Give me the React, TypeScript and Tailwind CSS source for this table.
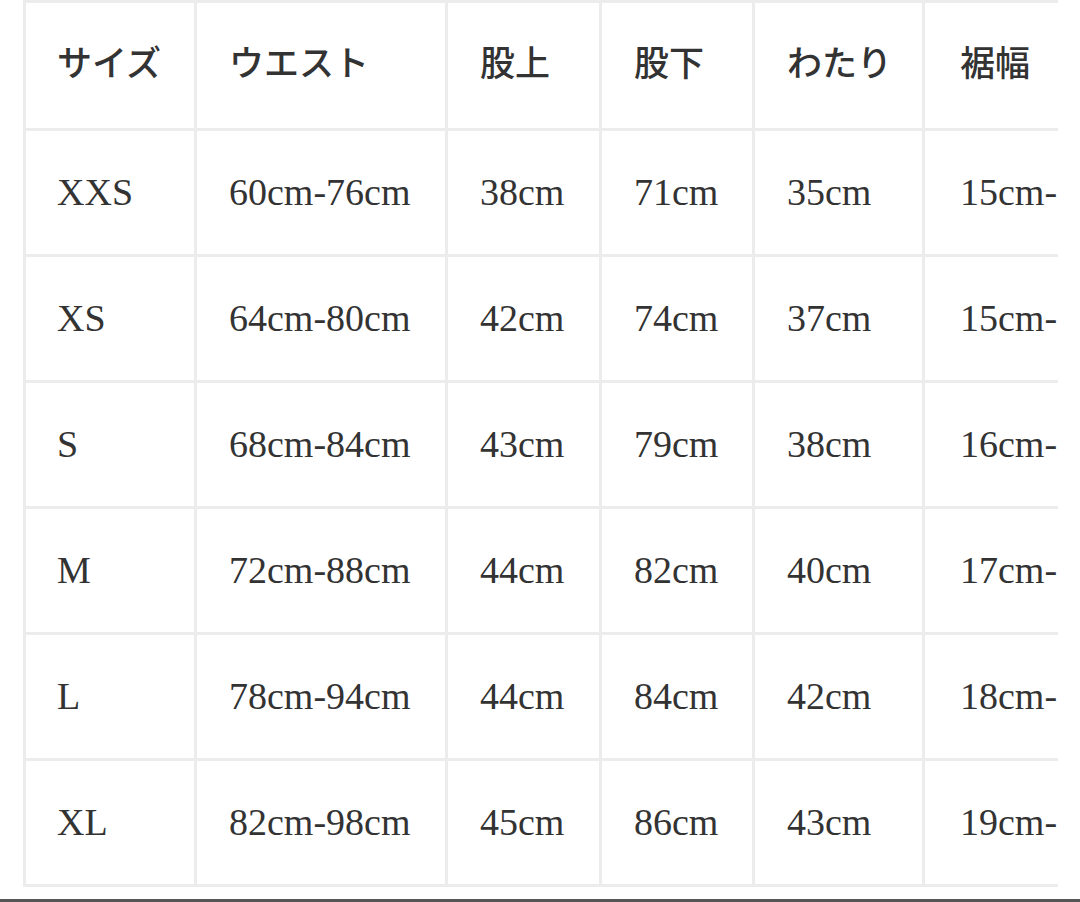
import React from 'react';

const headers = ['サイズ', 'ウエスト', '股上', '股下', 'わたり', '裾幅'];

const rows: string[][] = [
  ['XXS', '60cm-76cm', '38cm', '71cm', '35cm', '15cm-18cm'],
  ['XS', '64cm-80cm', '42cm', '74cm', '37cm', '15cm-18cm'],
  ['S', '68cm-84cm', '43cm', '79cm', '38cm', '16cm-19cm'],
  ['M', '72cm-88cm', '44cm', '82cm', '40cm', '17cm-20cm'],
  ['L', '78cm-94cm', '44cm', '84cm', '42cm', '18cm-21cm'],
  ['XL', '82cm-98cm', '45cm', '86cm', '43cm', '19cm-22cm'],
];

const colWidths = ['w-[171px]', 'w-[251px]', 'w-[154px]', 'w-[153px]', 'w-[170px]', 'w-[240px]'];
const padding = ['pl-[31px]', 'pl-[32px]', 'pl-[32px]', 'pl-[32px]', 'pl-[32px]', 'pl-[35px]'];

const App: React.FC = () => {
  return (
    <div className="w-[1080px] h-[902px] bg-white flex flex-col overflow-hidden">
      <div className="ml-[23px] w-[1035px] overflow-hidden">
        {/* size chart, cut off at the right like the original scroll box */}
        <table
          className="table-fixed border-collapse w-[1139px] text-[#333] text-left"
          style={{ fontFamily: '"Liberation Serif", "Noto Sans CJK JP", serif' }}
        >
          <colgroup>
            {colWidths.map((w, i) => (
              <col key={i} className={w} />
            ))}
          </colgroup>
          <thead>
            <tr className="h-[128px]">
              {headers.map((h, i) => (
                <th
                  key={i}
                  className={`border-[3px] border-[#ececec] ${padding[i]} pr-0 text-[35px] font-medium align-middle whitespace-nowrap`}
                >
                  {h}
                </th>
              ))}
            </tr>
          </thead>
          <tbody>
            {rows.map((r, ri) => (
              <tr key={ri} className="h-[126px]">
                {r.map((c, ci) => (
                  <td
                    key={ci}
                    className={`border-[3px] border-[#ececec] ${padding[ci]} pr-0 text-[38px] align-middle whitespace-nowrap`}
                  >
                    {c}
                  </td>
                ))}
              </tr>
            ))}
          </tbody>
        </table>
      </div>
      <div className="flex-1" />
      <div className="h-[3px] bg-[#555]" />
    </div>
  );
};

export default App;
